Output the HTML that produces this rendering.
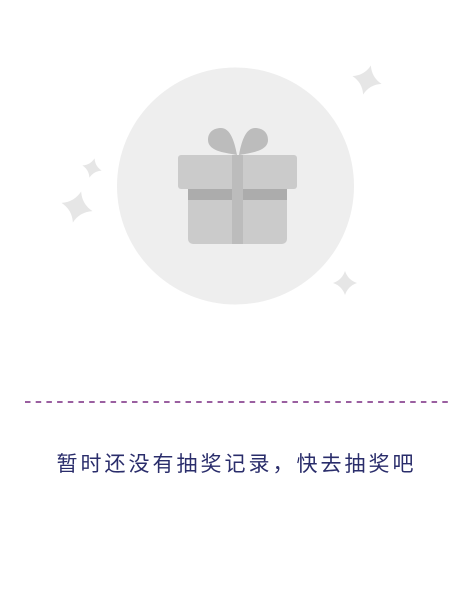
<!DOCTYPE html>
<html><head><meta charset="utf-8"><style>
html,body{margin:0;padding:0;background:#fff;width:470px;height:615px;overflow:hidden}
.t{position:absolute;left:0;width:470px;top:451px;text-align:center;font-family:"Liberation Sans","Noto Sans CJK SC",sans-serif;font-size:21px;letter-spacing:3px;color:#2a2d6b;line-height:28px;text-indent:3px}
</style></head><body>
<svg width="470" height="615" style="position:absolute;left:0;top:0">
<defs><path id="s" d="M0,-1 Q0.25,-0.25 1,0 Q0.25,0.25 0,1 Q-0.25,0.25 -1,0 Q-0.25,-0.25 0,-1Z"/></defs>
<circle cx="235.5" cy="186" r="118.5" fill="#eeeeee"/>
<g fill="#e6e6e6">
<use href="#s" transform="translate(367,80) rotate(15) scale(15)"/>
<use href="#s" transform="translate(77,207) rotate(15) scale(16)"/>
<use href="#s" transform="translate(92,168) rotate(15) scale(10)"/>
<use href="#s" transform="translate(345,283) scale(12)"/>
</g>
<path d="M237,155 C228,153 208,152 208,140 C208,131 215,128 221,128 C229,128 234,138 237,155Z" fill="#bcbcbc"/>
<path d="M239,155 C248,153 268,152 268,140 C268,131 261,128 255,128 C247,128 242,138 239,155Z" fill="#bcbcbc"/>
<rect x="188" y="185" width="99" height="59" rx="5" fill="#cbcbcb"/>
<rect x="188" y="189" width="99" height="11" fill="#acacac"/>
<rect x="178" y="155" width="119" height="34" rx="3" fill="#cbcbcb"/>
<rect x="232" y="155" width="11" height="89" fill="#bcbcbc"/>
<line x1="25" y1="402" x2="448" y2="402" stroke="#9a5fa0" stroke-width="2" stroke-dasharray="5.5,5.2"/>
</svg>
<div class="t">暂时还没有抽奖记录，快去抽奖吧</div>
</body></html>
